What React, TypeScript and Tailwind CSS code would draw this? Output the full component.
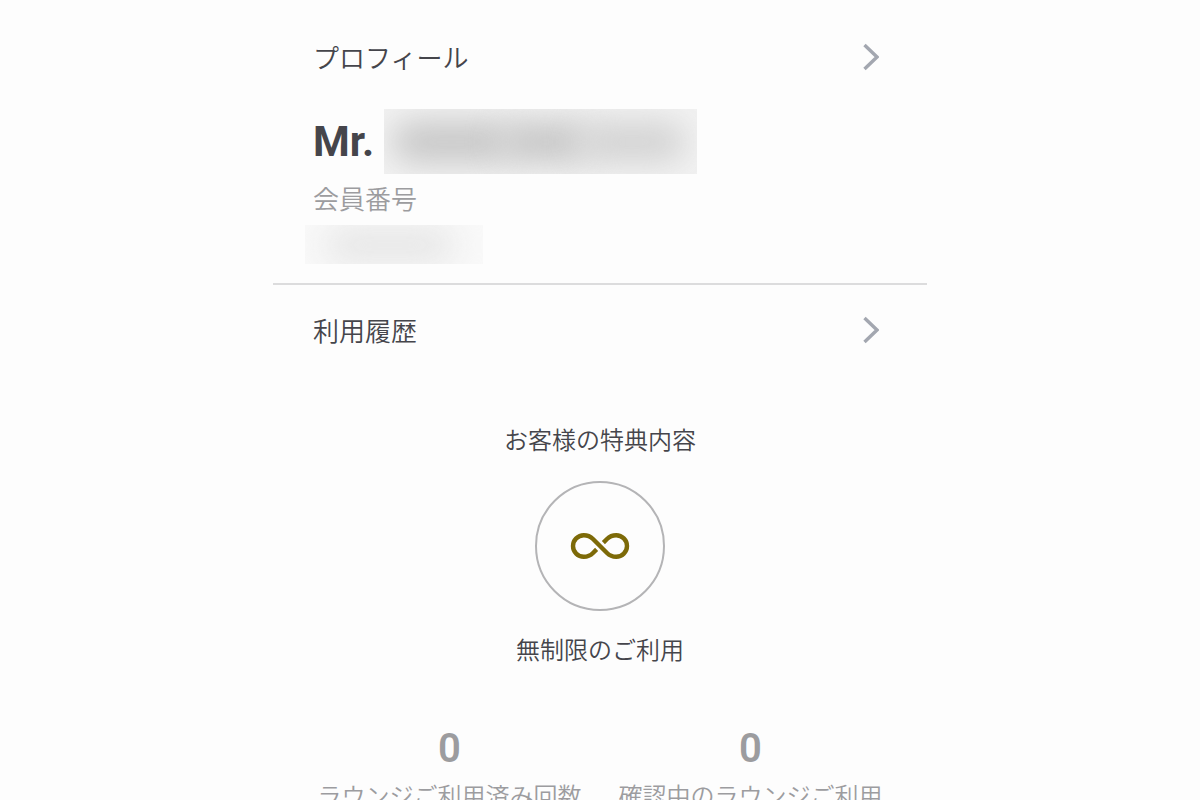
type Usage = {
  label: string;
  count: number;
};

const usages: Usage[] = [
  { label: "ラウンジご利用済み回数", count: 0 },
  { label: "確認中のラウンジご利用", count: 0 },
];

/* ── Icons ── */
function ChevronIcon() {
  return (
    <svg
      viewBox="0 0 16 28"
      className="h-7 w-4"
      fill="none"
      stroke="#a3a7b0"
      strokeWidth="3.4"
      aria-hidden="true"
    >
      <path d="M1.5 2 14 14 1.5 26" />
    </svg>
  );
}

function InfinityIcon() {
  return (
    <svg
      viewBox="0 0 60 28"
      className="h-7 w-[60px]"
      fill="none"
      stroke="#7d6a08"
      strokeWidth="4.4"
      aria-hidden="true"
    >
      <path d="M26.6 17.4 L23 21 C20.8 23.2 17.5 24.8 13.8 24.8 A10.8 10.8 0 0 1 13.8 3.2 C17.5 3.2 20.8 4.8 23 7 L37 21 C39.2 23.2 42.5 24.8 46.2 24.8 A10.8 10.8 0 0 0 46.2 3.2 C42.5 3.2 39.2 4.8 37 7 L33.4 10.6" />
    </svg>
  );
}

/* ── Rows ── */
function LinkRow({ label }: { label: string }) {
  return (
    <a
      href="#"
      className="flex h-[50px] items-center justify-between pr-12 pl-10 text-[26px] text-[#45454b]"
    >
      <span className="pb-0.5">{label}</span>
      <ChevronIcon />
    </a>
  );
}

/* ── Page ── */
export default function App() {
  return (
    <main className="min-h-screen overflow-hidden bg-[#fdfdfd] font-['Noto_Sans_CJK_JP',sans-serif] font-[350] text-[#45454b]">
      <div className="mx-auto w-full max-w-[654px]">
        {/* Profile */}
        <section className="border-b-2 border-[#dcdcdd] pt-8 pb-[19px]">
          <LinkRow label="プロフィール" />
          <div className="mt-[27px] flex items-center gap-2.5 pl-10">
            <span className="font-[Roboto,sans-serif] text-[42px] leading-[65px] font-bold text-[#45454b]">
              Mr.
            </span>
            {/* Masked name */}
            <div className="flex h-[65px] w-[313px] items-center overflow-hidden bg-[#f2f2f2]">
              <div className="ml-2 h-10 w-[120px] rounded-full bg-[#c6c6c6] blur-lg" />
              <div className="-ml-3 h-10 w-[90px] rounded-full bg-[#c6c6c6] blur-lg" />
              <div className="-ml-3 h-10 w-[108px] rounded-full bg-[#d2d2d2] blur-lg" />
            </div>
          </div>
          <p className="mt-[5px] pl-10 text-[26px] leading-[38px] text-[#9c9c9f]">
            会員番号
          </p>
          {/* Masked member number */}
          <div className="mt-2 ml-8 flex h-[39px] w-[178px] items-center overflow-hidden bg-[#f9f9f9]">
            <div className="ml-5 h-9 w-[130px] rounded-full bg-[#e6e6e6] blur-lg" />
          </div>
        </section>

        <nav className="pt-5">
          <LinkRow label="利用履歴" />
        </nav>

        {/* Benefits */}
        <section className="mt-[66px] flex flex-col items-center">
          <h2 className="text-2xl leading-9">お客様の特典内容</h2>
          <div className="mt-6 flex size-[130px] items-center justify-center rounded-full border-2 border-[#b4b4b6]">
            <InfinityIcon />
          </div>
          <p className="mt-5 text-2xl leading-9">無制限のご利用</p>
        </section>

        {/* Usage counts */}
        <dl className="mx-auto mt-[58px] grid max-w-[602px] grid-cols-2 text-center text-[#9c9c9f]">
          {usages.map((u) => (
            <div key={u.label} className="flex flex-col-reverse gap-1">
              <dt className="text-2xl leading-9 whitespace-nowrap">{u.label}</dt>
              <dd className="font-[Roboto,sans-serif] text-[40px] leading-[48px] font-semibold">
                {u.count}
              </dd>
            </div>
          ))}
        </dl>
      </div>
    </main>
  );
}
